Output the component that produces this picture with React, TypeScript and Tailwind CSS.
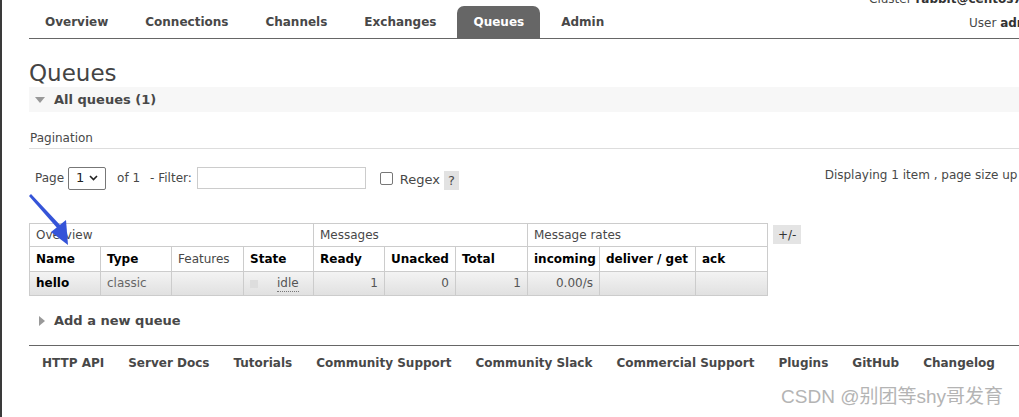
const font = { fontFamily: '"DejaVu Sans", Verdana, sans-serif' };

const tabs = ['Overview', 'Connections', 'Channels', 'Exchanges', 'Queues', 'Admin'];
const footerLinks = [
  'HTTP API',
  'Server Docs',
  'Tutorials',
  'Community Support',
  'Community Slack',
  'Commercial Support',
  'Plugins',
  'GitHub',
  'Changelog',
];

const cell = 'border border-[#cccccc] px-[6px] text-left overflow-hidden whitespace-nowrap';

export default function App() {
  return (
    <div
      className="relative w-[1019px] h-[417px] overflow-hidden bg-white border-l-2 border-[#3a3a3a] text-[12px] text-[#484848]"
      style={font}
    >
      <div className="pl-[27px]">
        {/* Header */}
        <div className="flex items-end h-[39px] border-b border-[#666666]">
          <ul className="flex gap-[5px]">
            {tabs.map((t) =>
              t === 'Queues' ? (
                <li key={t} className="h-8 px-4 flex items-center rounded-t-[7px] bg-[#666666] text-white font-bold text-[12px]">
                  {t}
                </li>
              ) : (
                <li key={t} className="h-8 px-4 flex items-center font-bold text-[12px] text-[#484848]">
                  {t}
                </li>
              )
            )}
          </ul>
          <div className="ml-auto self-start -mt-[13px] w-[150px] shrink-0 whitespace-nowrap text-[12px] leading-[24px]">
            <div>
              Cluster <b className="text-[#333]">rabbit@centos7</b>
            </div>
            <div className="pl-[100px]">
              User <b className="text-[#333]">admin</b>
            </div>
          </div>
        </div>

        {/* Title */}
        <h1 className="mt-[20px] text-[23px] leading-[28px] text-[#444444]">Queues</h1>
        <div className="flex items-center h-[25px] bg-[#f7f7f7] pl-[6px]">
          <span className="w-0 h-0 border-l-[5px] border-r-[5px] border-t-[6px] border-l-transparent border-r-transparent border-t-[#999999]" />
          <span className="ml-[9px] font-bold text-[13px] text-[#484848]">All queues (1)</span>
        </div>

        {/* Pagination */}
        <div className="mt-[17px] pb-[1px] border-b border-[#dddddd] pl-[1px] text-[12px]">Pagination</div>
        <div className="flex items-start mt-[17px] pl-[6px] pr-0 whitespace-nowrap">
          <div className="flex items-center">
            <span>Page</span>
            <span className="ml-[4px] w-[38px] h-[23px] border border-[#777777] rounded-[2px] flex items-center justify-between px-[7px] text-[13px] text-[#222]">
              1
              <svg width="9" height="6" viewBox="0 0 9 6">
                <path d="M1 1l3.5 3.5L8 1" fill="none" stroke="#222" strokeWidth="1.6" />
              </svg>
            </span>
            <span className="ml-[11px]">of 1</span>
            <span className="ml-[10px]">- Filter:</span>
            <span className="ml-[5px] w-[169px] h-[22px] border border-[#cccccc]" />
            <span className="ml-[14px] w-[13px] h-[13px] border border-[#777777] rounded-[2px]" />
            <span className="ml-[7px] text-[13px] mt-[4px]">Regex</span>
            <span className="ml-[4px] mt-[5px] px-[4px] h-[19px] flex items-center bg-[#e2e2e2] text-[13px]">?</span>
          </div>
          <div className="ml-auto mr-[-45px] text-[12px]">Displaying 1 item , page size up to: 100</div>
        </div>

        {/* Table */}
        <div className="flex items-start mt-[33px]">
          <table className="table-fixed w-[738px] border-collapse text-[12px] leading-[22px]">
            <colgroup>
              <col className="w-[71px]" />
              <col className="w-[71px]" />
              <col className="w-[72px]" />
              <col className="w-[70px]" />
              <col className="w-[71px]" />
              <col className="w-[71px]" />
              <col className="w-[72px]" />
              <col className="w-[72px]" />
              <col className="w-[96px]" />
              <col className="w-[72px]" />
            </colgroup>
            <thead>
              <tr className="bg-white">
                <th colSpan={4} className={`${cell} font-normal text-[#484848]`}>Overview</th>
                <th colSpan={3} className={`${cell} font-normal text-[#484848]`}>Messages</th>
                <th colSpan={3} className={`${cell} font-normal text-[#484848]`}>Message rates</th>
              </tr>
              <tr className="bg-white text-black leading-[23px]">
                <th className={`${cell} pt-[1px]`}>Name</th>
                <th className={`${cell} pt-[1px]`}>Type</th>
                <th className={`${cell} pt-[1px] font-normal text-[#484848]`}>Features</th>
                <th className={`${cell} pt-[1px]`}>State</th>
                <th className={`${cell} pt-[1px]`}>Ready</th>
                <th className={`${cell} pt-[1px]`}>Unacked</th>
                <th className={`${cell} pt-[1px]`}>Total</th>
                <th className={`${cell} pt-[1px] px-[5px]`}>incoming</th>
                <th className={`${cell} pt-[1px]`}>deliver / get</th>
                <th className={`${cell} pt-[1px]`}>ack</th>
              </tr>
            </thead>
            <tbody>
              <tr className="bg-linear-to-b from-[#f3f3f3] to-[#e0e0e0] leading-[23px]">
                <td className={`${cell} font-bold text-black`}>hello</td>
                <td className={`${cell} text-[#666666]`}>classic</td>
                <td className={cell}></td>
                <td className={`${cell} px-[4px]`}>
                  <div className="flex items-center">
                    <span className="w-[8px] h-[8px] bg-[#dddddd]" />
                    <span className="ml-[19px] text-[#555] border-b border-dotted border-[#777] leading-[16px]">idle</span>
                  </div>
                </td>
                <td className={`${cell} text-right text-[#555]`}>1</td>
                <td className={`${cell} text-right text-[#555]`}>0</td>
                <td className={`${cell} text-right text-[#555]`}>1</td>
                <td className={`${cell} text-right text-[#555]`}>0.00/s</td>
                <td className={cell}></td>
                <td className={cell}></td>
              </tr>
            </tbody>
          </table>
          <span className="ml-[5px] mt-[2px] px-[5px] h-[19px] flex items-center bg-[#e4e4e4] text-[12px] text-[#333]">+/-</span>
        </div>

        {/* Add a new queue */}
        <div className="flex items-center mt-[15px] pl-[10px]">
          <span className="w-0 h-0 border-t-[5px] border-b-[5px] border-l-[6px] border-t-transparent border-b-transparent border-l-[#999999]" />
          <span className="ml-[9px] font-bold text-[13px] text-[#484848]">Add a new queue</span>
        </div>

        {/* Footer */}
        <div className="mt-[14px] border-t border-[#666666] flex pl-[1px] pt-[8px] whitespace-nowrap">
          {footerLinks.map((l) => (
            <span key={l} className="px-3 font-bold text-[12px] text-[#484848]">
              {l}
            </span>
          ))}
        </div>
      </div>

      <div
        className="absolute right-[16px] bottom-[6px] text-[19px] text-[#b4b4b4]"
        style={{ fontFamily: '"Liberation Sans", "Noto Sans CJK SC", sans-serif' }}
      >
        CSDN @别团等shy哥发育
      </div>

      <svg className="absolute left-0 top-0 pointer-events-none" width="120" height="260" viewBox="0 0 120 260">
        <polygon points="27,196 29,194 59,226 56,229" fill="#3554d8" />
        <polygon points="49,232 64,220 66,245" fill="#3554d8" />
      </svg>
    </div>
  );
}
